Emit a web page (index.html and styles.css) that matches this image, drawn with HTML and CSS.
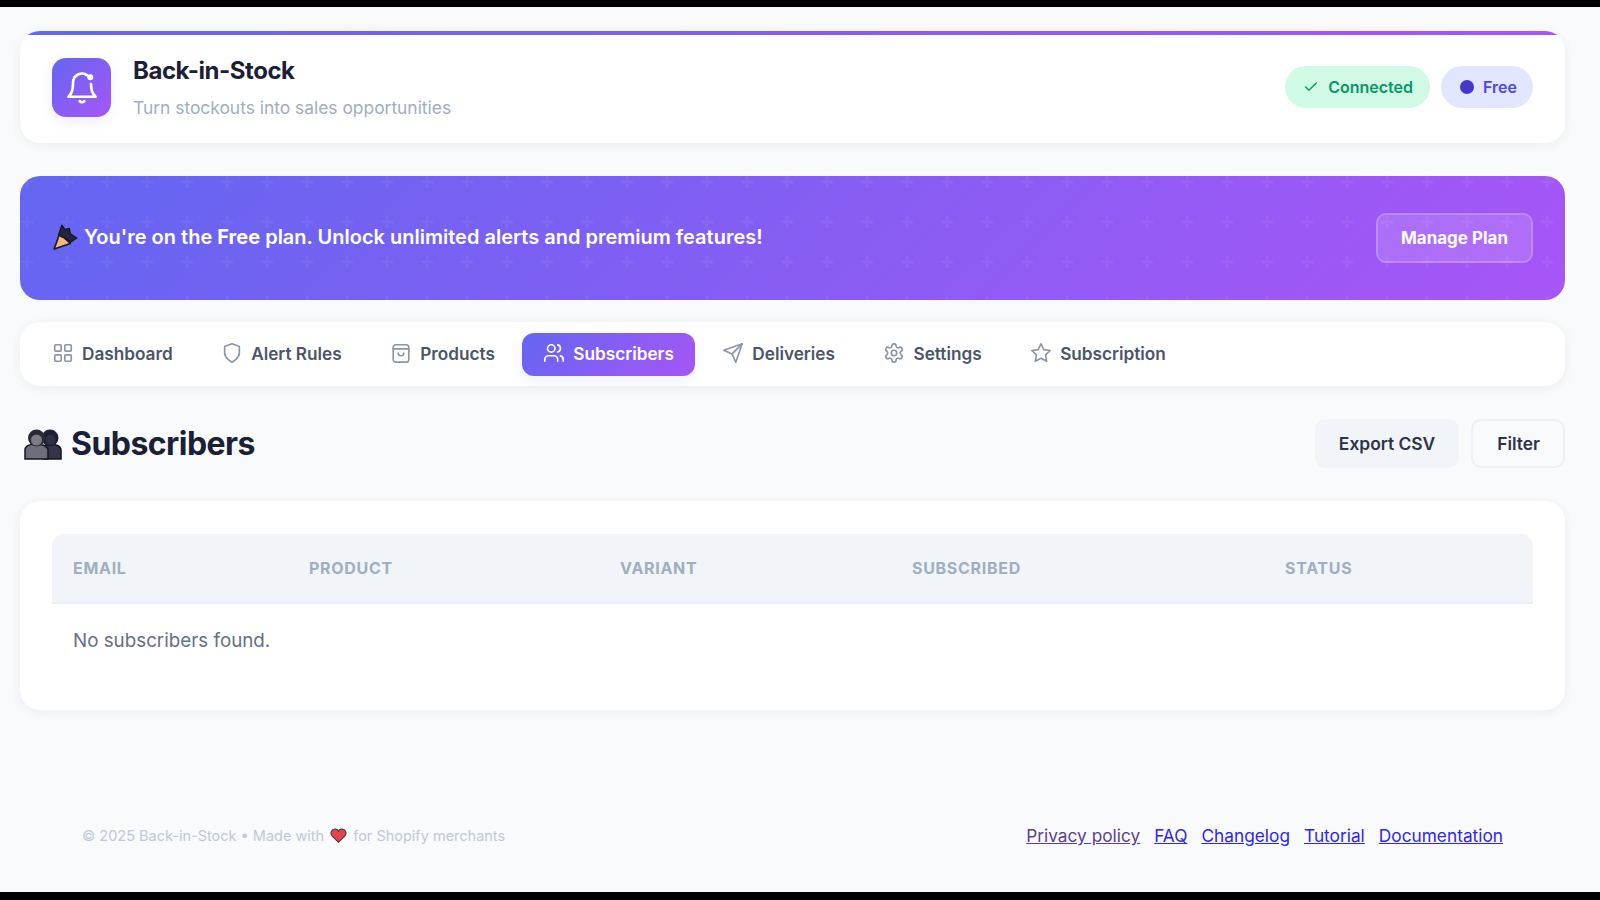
FILE: index.html
```html
<!DOCTYPE html>
<html lang="en">
<head>
    <meta charset="UTF-8">
    <meta name="viewport" content="width=device-width, initial-scale=1.0">
    <title>Back-in-Stock - Subscribers</title>
    <link rel="stylesheet" href="styles.css">
</head>
<body>
    <div class="page">
        <header class="header">
            <div class="brand">
                <div class="logo">
                    <svg class="logo-icon" viewBox="0 0 24 24"><path d="M6 9a6 6 0 0 1 9.500-4.800"/><path d="M18 10c0 6 2.500 8 3 8.500H3c.5-.5 3-2.500 3-8.500"/><path d="M10.500 21.500a2 2 0 0 0 3 0"/><circle class="logo-dot" cx="17.500" cy="5.500" r="2"/></svg>
                </div>
                <div class="brand-text">
                    <h1 class="title">Back-in-Stock</h1>
                    <p class="subtitle">Turn stockouts into sales opportunities</p>
                </div>
            </div>
            <div class="badges">
                <span class="badge badge-connected">
                    <svg class="check-icon" viewBox="0 0 24 24"><path d="M20 6 9 17l-5-5"/></svg>
                    Connected
                </span>
                <span class="badge badge-plan"><i class="plan-dot"></i>Free</span>
            </div>
        </header>

        <section class="banner">
            <p class="banner-text">
                <svg class="emoji-popper" viewBox="0 0 24 24">
                    <path class="emoji-cone" d="M7 9 17 18 2 23z"/>
                    <path class="emoji-dark" d="M6 10 9 1l3 4 4-1 1 5 6 4-6 4-5-4-3-1z"/>
                </svg>
                <span>You're on the <strong>Free</strong> plan. Unlock unlimited alerts and premium features!</span>
            </p>
            <a href="#" class="manage-button">Manage Plan</a>
        </section>

        <nav class="nav">
            <a href="#" class="nav-item">
                <svg class="nav-icon" viewBox="0 0 24 24"><rect x="3" y="3" width="7" height="7" rx="1"/><rect x="14" y="3" width="7" height="7" rx="1"/><rect x="3" y="14" width="7" height="7" rx="1"/><rect x="14" y="14" width="7" height="7" rx="1"/></svg>
                Dashboard
            </a>
            <a href="#" class="nav-item">
                <svg class="nav-icon" viewBox="0 0 24 24"><path d="M12 22s8-4 8-10V5l-8-3-8 3v7c0 6 8 10 8 10z"/></svg>
                Alert Rules
            </a>
            <a href="#" class="nav-item">
                <svg class="nav-icon" viewBox="0 0 24 24"><rect x="3.500" y="3" width="17" height="19" rx="3"/><path d="M3.500 7.500h17"/><path d="M9 12a3 3 0 0 0 6 0"/></svg>
                Products
            </a>
            <a href="#" class="nav-item active">
                <svg class="nav-icon" viewBox="0 0 24 24"><path d="M16 21v-2a4 4 0 0 0-4-4H6a4 4 0 0 0-4 4v2"/><circle cx="9" cy="7" r="4"/><path d="M22 21v-2a4 4 0 0 0-3-3.870"/><path d="M16 3.130a4 4 0 0 1 0 7.750"/></svg>
                Subscribers
            </a>
            <a href="#" class="nav-item">
                <svg class="nav-icon" viewBox="0 0 24 24"><path d="M22 2 11 13"/><path d="M22 2l-7 20-4-9-9-4 20-7z"/></svg>
                Deliveries
            </a>
            <a href="#" class="nav-item">
                <svg class="nav-icon" viewBox="0 0 24 24"><path d="M12.220 2h-.44a2 2 0 0 0-2 2v.18a2 2 0 0 1-1 1.730l-.43.25a2 2 0 0 1-2 0l-.15-.08a2 2 0 0 0-2.730.73l-.22.38a2 2 0 0 0 .73 2.730l.15.1a2 2 0 0 1 1 1.720v.51a2 2 0 0 1-1 1.740l-.15.09a2 2 0 0 0-.73 2.730l.22.38a2 2 0 0 0 2.730.73l.15-.08a2 2 0 0 1 2 0l.43.25a2 2 0 0 1 1 1.730V20a2 2 0 0 0 2 2h.44a2 2 0 0 0 2-2v-.18a2 2 0 0 1 1-1.730l.43-.25a2 2 0 0 1 2 0l.15.08a2 2 0 0 0 2.730-.73l.22-.39a2 2 0 0 0-.73-2.730l-.15-.08a2 2 0 0 1-1-1.740v-.5a2 2 0 0 1 1-1.740l.15-.09a2 2 0 0 0 .73-2.730l-.22-.38a2 2 0 0 0-2.730-.73l-.15.08a2 2 0 0 1-2 0l-.43-.25a2 2 0 0 1-1-1.730V4a2 2 0 0 0-2-2z"/><circle cx="12" cy="12" r="3"/></svg>
                Settings
            </a>
            <a href="#" class="nav-item">
                <svg class="nav-icon" viewBox="0 0 24 24"><path d="M12 2l3.090 6.260L22 9.270l-5 4.870 1.180 6.880L12 17.770l-6.180 3.250L7 14.140 2 9.270l6.910-1.010L12 2z"/></svg>
                Subscription
            </a>
        </nav>

        <div class="section-header">
            <h2 class="section-title">
                <svg class="emoji-busts" viewBox="0 0 38 32">
                    <path class="bust-back-body" d="M20 31V21c0-3 3-5 7-5s10 2 10 6v9z"/>
                    <circle class="bust-back-head" cx="26" cy="10" r="8.500"/>
                    <circle class="bust-back-face" cx="26.500" cy="12" r="5"/>
                    <path class="bust-front-body" d="M1 31v-9c0-4 5-6 11-6s12 2 12 6v9z"/>
                    <circle class="bust-front-head" cx="12.500" cy="10" r="8.500"/>
                    <circle class="bust-front-face" cx="12.500" cy="12" r="5.500"/>
                </svg>
                Subscribers
            </h2>
            <div class="section-actions">
                <a href="#" class="action-button action-export">Export CSV</a>
                <a href="#" class="action-button action-filter">Filter</a>
            </div>
        </div>

        <section class="table-card">
            <table class="data-table">
                <thead>
                    <tr>
                        <th>Email</th>
                        <th>Product</th>
                        <th>Variant</th>
                        <th>Subscribed</th>
                        <th>Status</th>
                    </tr>
                </thead>
                <tbody>
                    <tr>
                        <td colspan="5">No subscribers found.</td>
                    </tr>
                </tbody>
            </table>
        </section>

        <footer class="footer">
            <p class="footer-note">
                <span>© 2025 Back-in-Stock • Made with</span>
                <svg class="emoji-heart" viewBox="0 0 24 22"><path d="M12 21 2.500 11.500C-.5 8 1 2 6.500 1.500 9 1.300 11 2.500 12 4.500c1-2 3-3.200 5.500-3 5.500.5 7 6.500 4 10z"/></svg>
                <span>for Shopify merchants</span>
            </p>
            <div class="footer-links">
                <a href="#" class="visited">Privacy policy</a>
                <a href="#">FAQ</a>
                <a href="#">Changelog</a>
                <a href="#">Tutorial</a>
                <a href="#">Documentation</a>
            </div>
        </footer>
    </div>
</body>
</html>
```

FILE: styles.css
```css
:root {
    --page-bg: #f8fafc;
    --card-bg: #ffffff;
    --heading: #1a2035;
    --muted: #a0aec0;
    --nav-text: #4a5568;
    --brand-gradient: linear-gradient(135deg, #6366f1 0%, #a855f7 100%);
    --card-shadow: 0 2px 12px rgba(30, 41, 59, 0.06);
}

* {
    margin: 0;
    padding: 0;
    box-sizing: border-box;
}

body {
    font-family: Inter, "Noto Sans", sans-serif;
    background: #000000;
    height: 900px;
    overflow: hidden;
    padding: 7px 0 8px;
}

.page {
    background: var(--page-bg);
    height: 885px;
    padding: 24px 35px 0 20px;
}

.header {
    display: flex;
    justify-content: space-between;
    align-items: center;
    height: 112px;
    padding: 0 32px;
    background: var(--card-bg);
    border-radius: 20px;
    box-shadow: var(--card-shadow);
    position: relative;
    overflow: hidden;
}

.header::before {
    content: '';
    position: absolute;
    top: 0;
    left: 0;
    width: 100%;
    height: 4px;
    background: var(--brand-gradient);
}

.brand {
    display: flex;
    align-items: center;
    gap: 22px;
}

.logo {
    width: 59px;
    height: 59px;
    border-radius: 14px;
    background: var(--brand-gradient);
    box-shadow: 0 4px 12px rgba(99, 102, 241, 0.12);
    display: flex;
    align-items: center;
    justify-content: center;
}

.logo-icon {
    width: 36px;
    height: 36px;
    fill: none;
    stroke: #ffffff;
    stroke-width: 1.800;
    stroke-linecap: round;
    stroke-linejoin: round;
}

.logo-dot {
    fill: #ffffff;
    stroke: none;
}

.brand-text {
    display: flex;
    flex-direction: column;
    gap: 9px;
}

.title {
    font-size: 24px;
    font-weight: 700;
    line-height: 32px;
    color: var(--heading);
    letter-spacing: -0.45px;
}

.subtitle {
    font-size: 17.400px;
    line-height: 24px;
    color: var(--muted);
}

.badges {
    display: flex;
    gap: 11px;
}

.badge {
    display: flex;
    align-items: center;
    height: 42px;
    border-radius: 21px;
    font-size: 16px;
    font-weight: 600;
}

.badge-connected {
    padding: 0 17px 0 18px;
    gap: 9px;
    background: #d1fae5;
    color: #059669;
}

.check-icon {
    width: 16px;
    height: 16px;
    fill: none;
    stroke: #059669;
    stroke-width: 2;
    stroke-linecap: round;
    stroke-linejoin: round;
}

.badge-plan {
    padding: 0 16px 0 19px;
    gap: 9px;
    background: #e0e7ff;
    color: #4f46e5;
}

.plan-dot {
    width: 14px;
    height: 14px;
    border-radius: 50%;
    background: #4338ca;
}

.banner {
    display: flex;
    justify-content: space-between;
    align-items: center;
    height: 124px;
    margin-top: 33px;
    padding: 0 32px;
    border-radius: 20px;
    background: var(--brand-gradient);
    position: relative;
    overflow: hidden;
}

.banner::before {
    content: '';
    position: absolute;
    top: 0;
    left: 0;
    width: 100%;
    height: 100%;
    background-image: url("data:image/svg+xml,%3Csvg xmlns='http://www.w3.org/2000/svg' width='40' height='40'%3E%3Cpath d='M7 0v12M1 6h12' stroke='%23ffffff' stroke-opacity='.05' stroke-width='2.500' fill='none'/%3E%3C/svg%3E");
}

.banner-text {
    display: flex;
    align-items: center;
    gap: 6px;
    font-size: 20px;
    font-weight: 600;
    color: #ffffff;
    position: relative;
    margin-top: -2px;
}

.banner-text strong {
    font-weight: 700;
}

.emoji-popper {
    width: 26px;
    height: 26px;
    flex-shrink: 0;
}

.emoji-cone {
    fill: #efb67f;
    stroke: #1a1a24;
    stroke-width: 1.500;
    stroke-linejoin: round;
}

.emoji-dark {
    fill: #23263a;
    stroke: #111118;
    stroke-width: 1;
    stroke-linejoin: round;
}

.manage-button {
    width: 157px;
    height: 50px;
    display: flex;
    align-items: center;
    justify-content: center;
    background: rgba(255, 255, 255, 0.14);
    border: 2px solid rgba(255, 255, 255, 0.2);
    border-radius: 10px;
    color: #ffffff;
    font-size: 17px;
    font-weight: 700;
    text-decoration: none;
    position: relative;
}

.nav {
    display: flex;
    align-items: center;
    gap: 6.500px;
    height: 64px;
    margin-top: 22px;
    padding: 0 11px;
    background: var(--card-bg);
    border-radius: 20px;
    box-shadow: var(--card-shadow);
}

.nav-item {
    display: flex;
    align-items: center;
    gap: 8px;
    height: 43px;
    padding: 0 21px 2px;
    border-radius: 12px;
    color: var(--nav-text);
    font-size: 17.200px;
    font-weight: 600;
    text-decoration: none;
}

.nav-item.active {
    background: var(--brand-gradient);
    color: #ffffff;
    box-shadow: 0 4px 12px rgba(99, 102, 241, 0.1);
}

.nav-icon {
    width: 22px;
    height: 22px;
    fill: none;
    stroke: #8b95a7;
    stroke-width: 1.800;
    stroke-linecap: round;
    stroke-linejoin: round;
    flex-shrink: 0;
}

.nav-item.active .nav-icon {
    stroke: #ffffff;
}

.section-header {
    display: flex;
    justify-content: space-between;
    align-items: center;
    margin-top: 33px;
}

.section-title {
    display: flex;
    align-items: center;
    gap: 9px;
    padding-left: 4px;
    font-size: 32px;
    font-weight: 700;
    color: var(--heading);
    letter-spacing: -0.55px;
}

.emoji-busts {
    width: 38px;
    height: 32px;
}

.bust-back-body {
    fill: #34344a;
    stroke: #14141e;
    stroke-width: 1.500;
}

.bust-back-head {
    fill: #1e2030;
}

.bust-back-face {
    fill: #2e3146;
}

.bust-front-body {
    fill: #6f6f7c;
    stroke: #14141e;
    stroke-width: 1.500;
}

.bust-front-head {
    fill: #2a2a36;
}

.bust-front-face {
    fill: #7c7b86;
}

.section-actions {
    display: flex;
    gap: 12px;
}

.action-button {
    height: 49px;
    display: flex;
    align-items: center;
    border-radius: 10px;
    color: #2d3348;
    font-size: 17.400px;
    font-weight: 600;
    text-decoration: none;
}

.action-export {
    padding: 0 24px;
    background: #f1f5f9;
}

.action-filter {
    padding: 0 23px 0 24px;
    border: 2px solid #edf1f7;
}

.table-card {
    height: 209px;
    margin-top: 33px;
    padding: 33px 32px;
    background: var(--card-bg);
    border-radius: 20px;
    box-shadow: var(--card-shadow);
}

.data-table {
    width: 100%;
    table-layout: fixed;
    border-collapse: separate;
    border-spacing: 0;
}

.data-table th {
    height: 70px;
    padding: 0 21px;
    background: #f1f5f9;
    border-bottom: 2px solid #e8edf4;
    color: #a0aec0;
    font-size: 16px;
    font-weight: 700;
    letter-spacing: 0.7px;
    text-align: left;
    text-transform: uppercase;
}

.data-table th:nth-child(1) {
    width: 236px;
    border-top-left-radius: 12px;
}

.data-table th:nth-child(2) {
    width: 311px;
}

.data-table th:nth-child(3) {
    width: 292px;
}

.data-table th:nth-child(4) {
    width: 373px;
}

.data-table th:nth-child(5) {
    border-top-right-radius: 12px;
}

.data-table td {
    padding: 25px 21px 23px;
    color: #64708a;
    font-size: 18.800px;
    line-height: 24px;
}

.footer {
    display: flex;
    justify-content: space-between;
    align-items: center;
    margin-top: 115px;
    padding: 0 62px;
}

.footer-note {
    display: flex;
    align-items: center;
    color: #c1c8d6;
    font-size: 14.500px;
}

.emoji-heart {
    width: 17px;
    height: 15px;
    margin: 0 6px;
    fill: #e5424d;
    stroke: #3a3a48;
    stroke-width: 1.500;
}

.footer-links {
    display: flex;
    gap: 14px;
    font-size: 17.300px;
}

.footer-links a {
    color: #2f25ee;
}

.footer-links a.visited {
    color: #5f3f8f;
}
```
